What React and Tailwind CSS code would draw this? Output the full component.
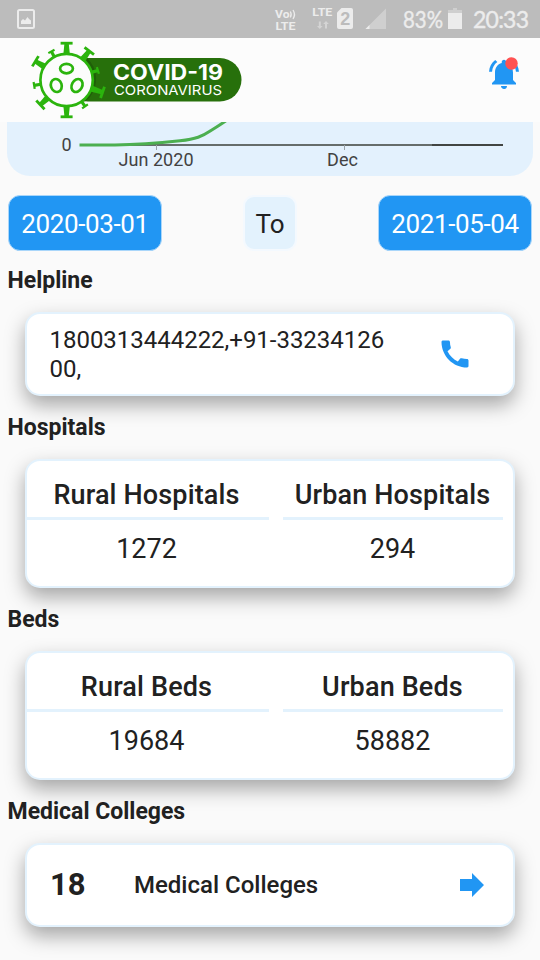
import React from "react";

const BLUE = "#2196f3";

function Spike({ angle, reach, big }) {
  const w = big ? 6 : 3.5;
  const t = big ? 2.8 : 2.2;
  return (
    <g transform={`rotate(${angle})`}>
      <rect x={-w} y={-reach} width={w * 2} height={t} />
      <path
        d={
          big
            ? `M-2.2 ${-reach + 2}H2.2L3.2 -26H-3.2Z`
            : `M-1.6 ${-reach + 1}H1.6V-26H-1.6Z`
        }
      />
    </g>
  );
}

const SPIKES = [
  [0, 38.2, true],
  [38, 38.2, true],
  [73, 33.8, false],
  [109, 39.4, true],
  [145, 33.2, false],
  [180, 38.2, true],
  [-133.5, 37.5, true],
  [-99.5, 34, false],
  [-59, 37.8, true],
  [-28, 33.4, false],
];

function Logo() {
  return (
    <svg width="214" height="84" viewBox="30 38 214 84">
      <rect x="66" y="58" width="175.5" height="43.5" rx="21.7" fill="#27700b" />
      <path
        d="M83 58h4a29 29 0 0 1 3 39l-5 4.500h-6z"
        fill="#1d5a08"
        opacity=".75"
      />
      <circle cx="66.6" cy="80" r="26.3" fill="#fcfcfc" />
      <g transform="translate(66.6 80)" fill="#2bb40d">
        {SPIKES.map(([angle, reach, big]) => (
          <Spike key={angle} angle={angle} reach={reach} big={big} />
        ))}
      </g>
      <g fill="none" stroke="#2bb40d" strokeWidth="2.7">
        <circle cx="66.6" cy="80" r="26.2" />
        <ellipse cx="66.500" cy="68.600" rx="6.400" ry="4.700" />
        <ellipse cx="56.300" cy="85.500" rx="5.400" ry="6.600" transform="rotate(-18 56.300 85.500)" />
        <ellipse cx="77" cy="85.500" rx="5.200" ry="6.800" transform="rotate(28 77 85.500)" />
      </g>
      <text x="113" y="79.700" textLength="110" lengthAdjust="spacingAndGlyphs" className="font-['Inter',sans-serif] text-[21.500px] font-bold" fill="#fff">
        COVID-19
      </text>
      <text x="114" y="95.300" textLength="108" lengthAdjust="spacingAndGlyphs" className="font-['Inter',sans-serif] text-[13.500px]" fill="#fff">
        CORONAVIRUS
      </text>
    </svg>
  );
}

function StatusBar() {
  return (
    <div className="flex h-[38px] items-center justify-between bg-[#bcbcbc]">
      <svg className="ml-[17px]" width="18" height="20" viewBox="0 0 18 20">
        <rect x="1" y="1" width="16" height="18" rx="1.500" fill="none" stroke="#ececec" strokeWidth="2" />
        <path d="M4 15v-3l2-2 2 1.500L10.500 8l1.500 2 2 1.500V15z" fill="#ececec" />
      </svg>
      <svg width="270" height="38" viewBox="270 0 270 38" fill="#ececec">
        <g className="font-['Roboto',sans-serif] font-bold">
          <text x="275" y="17.500" textLength="14.500" lengthAdjust="spacingAndGlyphs" className="text-[11px]">Vo</text>
          <text x="275.500" y="30.300" textLength="20" lengthAdjust="spacingAndGlyphs" className="text-[11px]">LTE</text>
          <text x="312.300" y="16" textLength="20" lengthAdjust="spacingAndGlyphs" className="text-[11.500px]">LTE</text>
        </g>
        <path d="M290.300 11.500q1.800 3 0 6M293 10q3 4.500 0 9" fill="none" stroke="#ececec" strokeWidth="1.300" />
        <path d="M318.800 21.500h2V26h1.800L319.800 29l-2.800-3h1.800zM325 28.500h2V24h1.800L326 21l-2.800 3h1.800z" fill="#d4d4d4" />
        <path d="M341.500 8H351q2 0 2 2v17q0 2-2 2h-12q-2 0-2-2V12.500z" />
        <text x="340.200" y="25" className="font-['Liberation_Sans',sans-serif] text-[18px] font-bold" fill="#bcbcbc">2</text>
        <path d="M386 8.500V29h-20.500z" fill="#cfcfcf" />
        <path d="M369.500 25v4h-4z" />
        <path d="M453 8h4v2h5v3h-14v-3h5z" fill="#cfcfcf" />
        <path d="M448 13h14v16h-14z" />
        <g className="font-['Lato',sans-serif] text-[23px]" stroke="#ececec" strokeWidth=".4">
          <text x="403" y="28" textLength="40" lengthAdjust="spacingAndGlyphs">83%</text>
          <text x="473" y="28" textLength="56" lengthAdjust="spacing">20:33</text>
        </g>
      </svg>
    </div>
  );
}

function Header() {
  return (
    <header className="flex h-[84px] items-start justify-between bg-[#fcfcfc] pr-[18px] pl-[30px]">
      <Logo />
      <svg className="mt-[18px]" width="36" height="36" viewBox="0 0 24 24" fill={BLUE}>
        <path d="M7.580 4.080 6.150 2.650C3.750 4.480 2.170 7.300 2.030 10.500h2c.15-2.650 1.510-4.970 3.550-6.420zm12.390 6.420h2c-.15-3.200-1.730-6.020-4.120-7.850l-1.420 1.430c2.020 1.450 3.390 3.770 3.540 6.420zM18 11c0-3.070-1.640-5.640-4.500-6.320V4c0-.83-.67-1.500-1.500-1.500s-1.500.67-1.500 1.500v.68C7.630 5.360 6 7.920 6 11v5l-2 2v1h16v-1l-2-2v-5zm-6 11c.14 0 .27-.01.4-.04.65-.14 1.180-.58 1.440-1.180.1-.24.15-.5.15-.78h-4c.01 1.100.9 2 2.010 2z" />
        <circle cx="17" cy="5" r="4.150" fill="#ff5252" />
      </svg>
    </header>
  );
}

function Chart() {
  return (
    <svg className="mx-auto block h-[53.500px] w-[526px] rounded-b-[23px] bg-[#e3f1fd]" viewBox="7 122 526 53.5">
      <path d="M80 145H503" stroke="#666d6b" strokeWidth="2" />
      <path d="M432 145H503" stroke="#424542" strokeWidth="2" />
      <path d="M156.500 145v5M344.500 145v5" stroke="#9aa3a8" strokeWidth="1" />
      <path d="M79.500 145H115C143 144.800 160 143 180 140.800C196 139 202 136.500 211 130.500Q220 125 230 118" fill="none" stroke="#4caf50" strokeWidth="3" />
      <g className="font-['Roboto',sans-serif] text-[18px]" fill="#424242">
        <text x="61.500" y="151">0</text>
        <text x="118.500" y="166" textLength="75">Jun 2020</text>
        <text x="327" y="166" textLength="31">Dec</text>
      </g>
    </svg>
  );
}

function DateButton({ children }) {
  return (
    <button className="flex h-[56px] w-[154px] items-center justify-center rounded-[12px] border border-[#a9d6fa] bg-[#2196f3] pt-[2px] text-[26px] tracking-[-0.4px] whitespace-nowrap text-white">
      {children}
    </button>
  );
}

function Heading({ children }) {
  return (
    <h2 className="flex h-full items-center text-[23px] leading-[28px] font-bold">{children}</h2>
  );
}

function Card({ className, children }) {
  return (
    <div className={`mx-[25px] rounded-[15px] border-2 border-[#e3f2fd] bg-white shadow-[0_9px_20px_rgba(0,0,0,0.34)] ${className}`}>
      {children}
    </div>
  );
}

function Stat({ label, value, className }) {
  return (
    <div className={className}>
      <div className="flex h-[59px] items-center justify-center border-b-3 border-[#e3f2fd] pt-[11px] text-[27px] leading-[32px] font-medium tracking-[0.15px] whitespace-nowrap">
        {label}
      </div>
      <div className="flex h-[58px] items-center justify-center text-[27px]">{value}</div>
    </div>
  );
}

function StatCard({ noun, rural, urban }) {
  return (
    <Card className="flex h-[129px]">
      <Stat className="w-[242px] [&>div]:pr-[3px]" label={`Rural ${noun}`} value={rural} />
      <Stat className="ml-[14px] w-[220px] [&>div]:pr-[1px]" label={`Urban ${noun}`} value={urban} />
    </Card>
  );
}

export default function App() {
  return (
    <div className="h-[960px] w-[540px] overflow-hidden bg-[#fafafa] font-['Roboto',sans-serif] text-[#212121]">
      <StatusBar />
      <Header />
      <Chart />
      <div className="mt-[19.500px] flex justify-between px-[8px]">
        <DateButton>2020-03-01</DateButton>
        <div className="flex h-[56px] w-[54px] items-center justify-center rounded-[11px] border-2 border-[#f4f9fe] bg-[#e3f2fd] pt-[2px] text-[26px]">To</div>
        <DateButton>2021-05-04</DateButton>
      </div>

      <div className="h-[61px] pb-px pl-[7.500px]"><Heading>Helpline</Heading></div>
      <Card className="flex h-[84px] justify-between pr-[40px] pl-[22.500px]">
        <p className="mt-[12px] w-[342px] text-[24px] leading-[29px] tracking-[-0.02px] break-all">1800313444222,+91-3323412600,</p>
        <svg className="mt-[22px]" width="36" height="36" viewBox="0 0 24 24" fill={BLUE}>
          <path d="M20.010 15.380c-1.230 0-2.420-.2-3.530-.56-.35-.12-.74-.03-1.010.24l-1.570 1.970c-2.830-1.350-5.480-3.900-6.890-6.830l1.950-1.660c.27-.28.35-.67.24-1.020-.37-1.110-.56-2.300-.56-3.530 0-.54-.45-.99-.99-.99H4.190C3.650 3 3 3.240 3 3.990 3 13.280 10.730 21 20.010 21c.71 0 .99-.63.99-1.180v-3.450c0-.54-.45-.99-.99-.99z" />
        </svg>
      </Card>

      <div className="h-[63px] pl-[7.500px]"><Heading>Hospitals</Heading></div>
      <StatCard noun="Hospitals" rural="1272" urban="294" />

      <div className="h-[63px] pl-[7.500px]"><Heading>Beds</Heading></div>
      <StatCard noun="Beds" rural="19684" urban="58882" />

      <div className="h-[63px] pl-[7.500px]"><Heading>Medical Colleges</Heading></div>
      <Card className="flex h-[84px] items-center pr-[23px] pl-[23px]">
        <span className="w-[84px] text-[31px] font-bold">18</span>
        <span className="text-[24px] font-medium">Medical Colleges</span>
        <svg className="ml-auto" width="36" height="36" viewBox="0 0 24 24" fill={BLUE}>
          <path d="M12 8V4l8 8-8 8v-4H4V8z" />
        </svg>
      </Card>
    </div>
  );
}
